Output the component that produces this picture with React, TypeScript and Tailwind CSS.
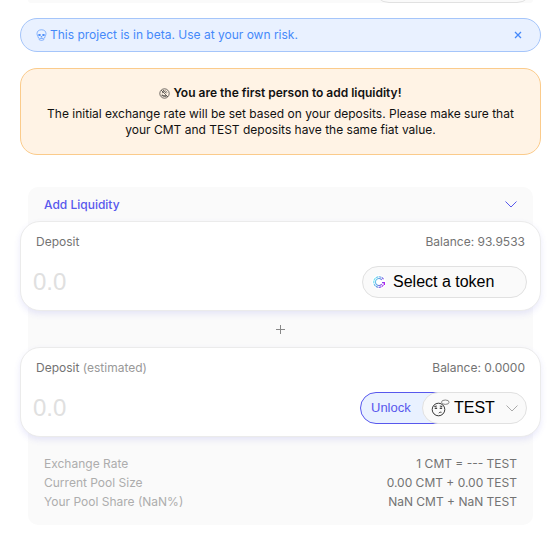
import type { ReactNode } from 'react';

const arial = "font-['Liberation_Sans',Arial,sans-serif]";

function SkullIcon() {
  return (
    <svg className="h-3 w-[11px] shrink-0" viewBox="0 0 11 12" fill="none" stroke="currentColor" strokeWidth="0.6" aria-hidden="true">
      <path d="M1 4.600C1 2.200 2.800.8 5.500.8S10 2.200 10 4.600c0 1.200-.3 2-.9 2.700v1L7.800 9v1.800l-2.300.6-2.300-.6V9l-1.300-.7v-1C1.300 6.600 1 5.800 1 4.600Z" />
      <ellipse cx="3.500" cy="6" rx="1.400" ry="1.100" fill="currentColor" stroke="none" />
      <ellipse cx="7.500" cy="6" rx="1.400" ry="1.100" fill="currentColor" stroke="none" />
      <path d="m5.500 7-.6 1.200h1.200ZM4 9.500h3" />
    </svg>
  );
}

function HandIcon() {
  return (
    <svg className="size-[11px] shrink-0" viewBox="0 0 11 11" fill="none" stroke="currentColor" strokeWidth="0.6" aria-hidden="true">
      <circle cx="5.500" cy="5.500" r="4.700" />
      <path d="m2.200 2.200 6.600 6.600M3.400 5.200 4.600 2.200l1.300 2 1.500 1M2.800 6.500l2 1.600 2.500-.6M2.500 7.500l5 1M6.400 2.500l1.600 2" />
    </svg>
  );
}

function ThinkingIcon() {
  return (
    <svg className="h-[18px] w-[19px] shrink-0" viewBox="0 0 19 18" fill="none" stroke="#222" strokeWidth="0.9" aria-hidden="true">
      <circle cx="7.500" cy="10.500" r="6.300" />
      <path d="M3.300 7.600 5.800 7M8.800 7l2.500.6M7.800 14.200c.6-.9 1.500-1.200 2.700-.9" />
      <path d="M3.600 9.300h2.600M8.600 9.300h2.600" strokeWidth="0.700" />
      <circle cx="5" cy="9.300" r=".8" fill="#222" stroke="none" />
      <circle cx="10" cy="9.300" r=".8" fill="#222" stroke="none" />
      <ellipse cx="14.300" cy="3.200" rx="3.800" ry="2.200" fill="#fafafa" stroke="#777" />
      <path d="m11.500 5-1 1.200" stroke="#777" />
    </svg>
  );
}

function TokenLogo() {
  return (
    <svg className="size-[14px] shrink-0" viewBox="0 0 14 14" fill="none" aria-hidden="true">
      <defs>
        <linearGradient id="token-gradient" x1="1" y1="5" x2="13" y2="10" gradientUnits="userSpaceOnUse">
          <stop stopColor="#6ff0f5" />
          <stop offset=".5" stopColor="#5f8fe0" />
          <stop offset="1" stopColor="#b500f0" />
        </linearGradient>
      </defs>
      <circle cx="7" cy="7" r="7" fill="#fff" />
      <g stroke="url(#token-gradient)">
        <path d="M11.500 4.200A5.300 5.300 0 1 0 11.300 10.200" strokeWidth="1.100" strokeDasharray="2.500 .5" />
        <path d="M9.800 5A3.500 3.500 0 1 0 9.800 9" strokeWidth="1.100" />
        <path d="M10 7.700h2.300v2.200" strokeWidth="1.300" />
      </g>
    </svg>
  );
}

function Chevron() {
  return (
    <svg className="h-[7px] w-3 shrink-0" viewBox="0 0 12 7" fill="none" stroke="currentColor" aria-hidden="true">
      <path d="m.5.500 5.500 5.500L11.500.5" />
    </svg>
  );
}

type DepositCardProps = {
  id: string;
  note?: string;
  balance: string;
  children: ReactNode;
};

function DepositCard({ id, note, balance, children }: DepositCardProps) {
  return (
    <section className="h-[90px] rounded-[20px] border border-[#ebebeb] bg-white px-3 pt-2.5 shadow-[0_3px_6px_rgba(80,80,220,0.12)]">
      <div className="flex justify-between px-[3px] leading-5 text-[#737373]">
        <label htmlFor={id}>
          Deposit {note && <span className="text-[#999]">{note}</span>}
        </label>
        <span>Balance: {balance}</span>
      </div>
      <div className="mt-3.5 flex items-center justify-between pr-px">
        <input id={id} type="text" placeholder="0.0" className={`h-8 w-0 min-w-0 grow bg-transparent text-2xl outline-none placeholder:text-[#e0e0e0] ${arial}`} />
        {children}
      </div>
    </section>
  );
}

const rates = [
  ['Exchange Rate', '1 CMT = --- TEST'],
  ['Current Pool Size', '0.00 CMT + 0.00 TEST'],
  ['Your Pool Share (NaN%)', 'NaN CMT + NaN TEST'],
];

export default function App() {
  return (
    <main className="bg-white pr-[10px] pl-5 font-['Inter',sans-serif] text-[12px]">
      <div className="mx-2 flex h-[3px] items-end justify-end overflow-hidden rounded-b-xl bg-[#fafafa]">
        <div className="h-8 w-[160px] shrink-0 rounded-full border border-[#e1e1e1] bg-[#fafafa]" />
      </div>

      <div className="mt-[15px] flex h-[34px] items-center rounded-[17px] border border-[#a5c5fa] bg-[#e9f1ff] pr-4 pl-[15px] text-[#4589fa]">
        <SkullIcon />
        <p className="ml-[3px] grow">This project is in beta. Use at your own risk.</p>
        <button type="button" aria-label="Dismiss" className="flex size-3 items-center justify-center">
          <svg className="size-2" viewBox="0 0 8 8" stroke="currentColor" strokeWidth="1.300" aria-hidden="true">
            <path d="m1 1 6 6M7 1 1 7" />
          </svg>
        </button>
      </div>

      <div className="mt-4 rounded-[17px] border border-[#fbcb8b] bg-[#fff3e5] px-5 py-4 text-center leading-4 text-[#111]">
        <h2 className="flex items-center justify-center gap-[3px] font-semibold">
          <HandIcon />
          You are the first person to add liquidity!
        </h2>
        <p className="mt-[5px]">
          The initial exchange rate will be set based on your deposits. Please make sure that your CMT and TEST deposits have the same fiat value.
        </p>
      </div>

      <div className="relative isolate mt-8 before:absolute before:inset-x-2 before:inset-y-0 before:-z-10 before:rounded-[10px] before:bg-[#fafafa]">
        <button type="button" className="flex h-[34px] w-full items-center justify-between px-6 pt-px font-medium text-[#5858ed]">
          Add Liquidity
          <Chevron />
        </button>

        <DepositCard id="deposit-first" balance="93.9533">
          <button type="button" className={`flex h-8 w-[165px] items-center gap-[7px] rounded-full border border-[#e1e1e1] bg-[#fafafa] pl-[9px] text-base text-black ${arial}`}>
            <TokenLogo />
            Select a token
          </button>
        </DepositCard>

        <div className="flex h-9 items-center justify-center text-[#888]">
          <svg className="size-[9px]" viewBox="0 0 9 9" stroke="currentColor" aria-hidden="true">
            <path d="M0 4.500h9M4.500 0v9" />
          </svg>
        </div>

        <DepositCard id="deposit-second" note="(estimated)" balance="0.0000">
          <button type="button" className={`-mr-[22px] h-8 w-[84px] rounded-l-full border border-[#5858ed] bg-[#e9f1ff] pl-2.5 text-left text-[13px] text-[#5858ed] ${arial}`}>
            Unlock
          </button>
          <button type="button" className={`relative flex h-8 w-[105px] items-center rounded-full border border-[#e1e1e1] bg-[#fafafa] pr-2 pl-2 text-base text-black ${arial}`}>
            <ThinkingIcon />
            <span className="ml-1 grow text-left">TEST</span>
            <span className="text-[#aaa]"><Chevron /></span>
          </button>
        </DepositCard>

        <dl className="px-6 pt-[17px] pb-3.5 leading-[19px]">
          {rates.map(([name, value]) => (
            <div key={name} className="flex justify-between">
              <dt className="text-[#adadad]">{name}</dt>
              <dd className="text-[#737373]">{value}</dd>
            </div>
          ))}
        </dl>
      </div>
    </main>
  );
}
